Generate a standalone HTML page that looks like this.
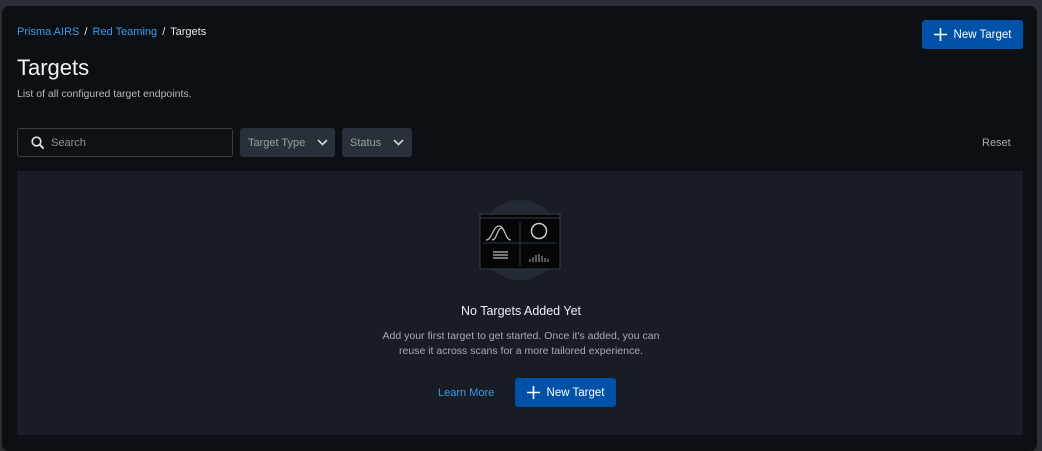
<!DOCTYPE html>
<html><head><style>
*{margin:0;padding:0;box-sizing:border-box}
body{width:1042px;height:445px;background:#2a2f36;font-family:"Liberation Sans",sans-serif;overflow:hidden;position:relative}
.panel{position:absolute;left:2px;top:6px;width:1035px;height:445px;background:#0c0f13;border-radius:7px}
.abs{position:absolute}
.crumb{left:17px;top:26px;font-size:11px;color:#e6e8ea;word-spacing:2px}
.crumb a{color:#3d9be9;text-decoration:none;word-spacing:0}
h1{position:absolute;left:17px;top:55px;font-size:22px;font-weight:normal;color:#f2f3f4}
.sub{left:17px;top:88px;font-size:10.5px;color:#b5b9be}
.btn{background:#0052a8;color:#fff;border-radius:3px;font-size:11.5px;display:flex;align-items:center;justify-content:center;gap:7px}
.search{left:17px;top:128px;width:216px;height:29px;border:1px solid #3a3f46;border-radius:3px;background:#0e1115;color:#8e939a;font-size:11px;display:flex;align-items:center;padding-left:13px;gap:6px}
.dd{top:128px;height:29px;background:#2a3039;border-radius:3px;color:#9ba0a7;font-size:11px;display:flex;align-items:center;padding-left:8px;gap:12px}
.empty{left:17px;top:171px;width:1006px;height:264px;background:#181c24}
</style></head><body>
<div class="panel"></div>
<div class="abs crumb"><a>Prisma AIRS</a> / <a>Red Teaming</a> / Targets</div>
<h1>Targets</h1>
<div class="abs sub">List of all configured target endpoints.</div>
<div class="abs btn" style="left:922px;top:20px;width:101px;height:29px"><svg width="13" height="13"><path d="M6.5 0v13M0 6.5h13" stroke="#fff" stroke-width="1.6"/></svg>New Target</div>
<div class="abs search"><svg width="14" height="14"><circle cx="5.5" cy="5.5" r="4.3" stroke="#dfe1e3" stroke-width="1.7" fill="none"/><path d="M8.6 8.6l4 4" stroke="#dfe1e3" stroke-width="1.9"/></svg>Search</div>
<div class="abs dd" style="left:240px;width:95px">Target Type<svg width="11" height="7"><path d="M1 1l4.5 4.5L10 1" stroke="#cdd0d4" stroke-width="1.7" fill="none"/></svg></div>
<div class="abs dd" style="left:342px;width:70px">Status<svg width="11" height="7"><path d="M1 1l4.5 4.5L10 1" stroke="#cdd0d4" stroke-width="1.7" fill="none"/></svg></div>
<div class="abs" style="left:982px;top:137px;font-size:11px;color:#a8acb1">Reset</div>
<div class="abs empty"></div>
<svg class="abs" style="left:478px;top:200px" width="85" height="82">
<circle cx="42" cy="40" r="40" fill="#232a33"/>
<rect x="2" y="14" width="80" height="55" fill="#050607" stroke="#3a3f45"/>
<line x1="2" y1="18" x2="82" y2="18" stroke="#3a3f45"/>
<line x1="42" y1="22" x2="42" y2="66" stroke="#33383e"/>
<line x1="5" y1="43" x2="79" y2="43" stroke="#33383e"/>
<path d="M8 40c6 0 7-14 13-14s6 14 12 14M14 40c5 0 5-12 10-12" stroke="#bbb" stroke-width="1.3" fill="none"/>
<circle cx="61" cy="31" r="7.5" stroke="#ccc" stroke-width="1.5" fill="none"/>
<path d="M15 52h15M15 55h15M15 58h15" stroke="#bbb" stroke-width="1.2"/>
<path d="M52 62v-3M55 62v-5M58 62v-7M61 62v-8M64 62v-6M67 62v-4M70 62v-3" stroke="#aaa" stroke-width="1"/>
</svg>
<div class="abs" style="left:0;width:1042px;text-align:center;top:304px;font-size:12.5px;color:#eceef0">No Targets Added Yet</div>
<div class="abs" style="left:0;width:1042px;text-align:center;top:329px;font-size:10.5px;color:#a7abb1;line-height:15px">Add your first target to get started. Once it's added, you can<br>reuse it across scans for a more tailored experience.</div>
<div class="abs" style="left:438px;top:387px;font-size:11px;color:#3d9be9">Learn More</div>
<div class="abs btn" style="left:515px;top:378px;width:101px;height:29px"><svg width="13" height="13"><path d="M6.5 0v13M0 6.5h13" stroke="#fff" stroke-width="1.6"/></svg>New Target</div>
</body></html>
